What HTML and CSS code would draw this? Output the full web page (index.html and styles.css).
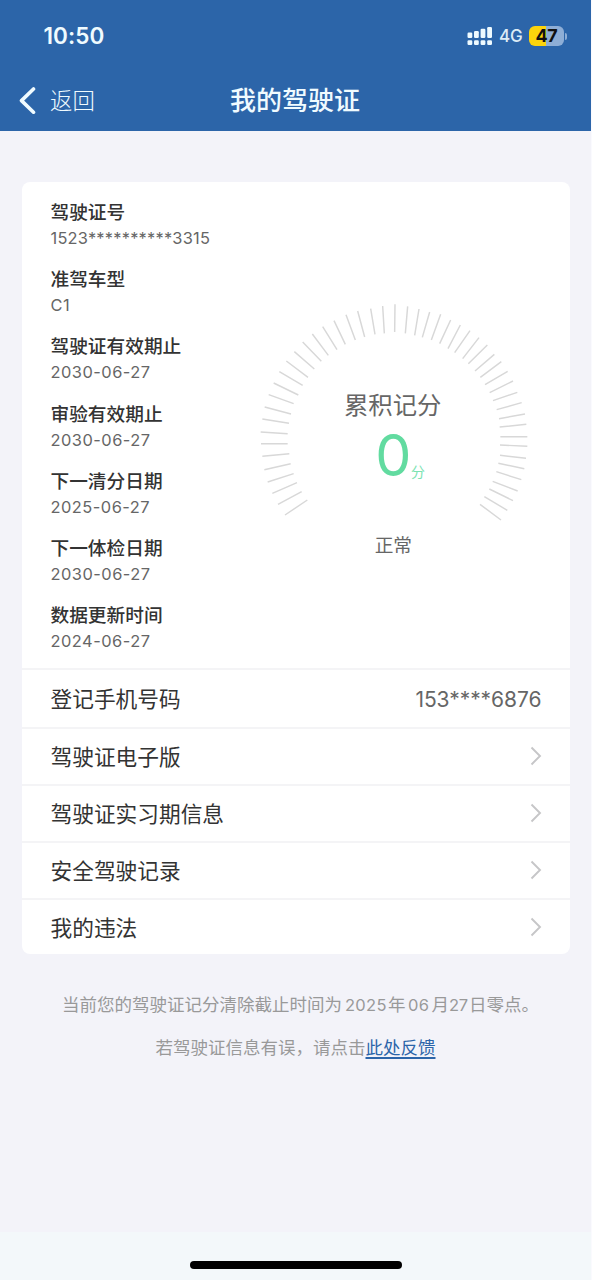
FILE: index.html
```html
<!DOCTYPE html>
<html lang="zh-CN">
<head>
<meta charset="utf-8">
<title>我的驾驶证</title>
<link rel="stylesheet" href="styles.css">
</head>
<body>
<div class="screen">
  <header class="header">
    <div class="status">
      <span class="clock">10:50</span>
      <div class="status-right">
        <svg class="signal" width="26" height="20" viewBox="0 0 26 20" fill="#eefaff">
          <rect x="0.5" y="6.5" width="4.8" height="5.5" rx="1.2"/><rect x="7" y="5" width="4.8" height="7" rx="1.2"/><rect x="13.6" y="2.8" width="4.8" height="9.2" rx="1.2"/><rect x="20.2" y="1" width="4.8" height="11" rx="1.2"/>
          <rect x="0.5" y="14.3" width="4.8" height="4.6" rx="1.2"/><rect x="7" y="14.3" width="4.8" height="4.6" rx="1.2"/><rect x="13.6" y="14.3" width="4.8" height="4.6" rx="1.2"/><rect x="20.2" y="14.3" width="4.8" height="4.6" rx="1.2"/>
        </svg>
        <span class="net">4G</span>
        <div class="battery">47</div>
        <div class="battery-cap"></div>
      </div>
    </div>
    <nav class="nav">
      <div class="back">
        <svg width="18" height="28" viewBox="0 0 18 28" fill="none" stroke="#f0fbff" stroke-width="3.6" stroke-linecap="round" stroke-linejoin="round"><path d="M15.5 2 3.5 13.6 15.5 25.2"/></svg>
        <span class="back-text">返回</span>
      </div>
      <h1 class="title">我的驾驶证</h1>
    </nav>
  </header>

  <main class="card">
    <section class="summary">
      <dl class="fields">
        <div class="field"><dt>驾驶证号</dt><dd class="id-number">1523**********3315</dd></div>
        <div class="field"><dt>准驾车型</dt><dd>C1</dd></div>
        <div class="field"><dt>驾驶证有效期止</dt><dd>2030-06-27</dd></div>
        <div class="field"><dt>审验有效期止</dt><dd>2030-06-27</dd></div>
        <div class="field"><dt>下一清分日期</dt><dd>2025-06-27</dd></div>
        <div class="field"><dt>下一体检日期</dt><dd>2030-06-27</dd></div>
        <div class="field"><dt>数据更新时间</dt><dd>2024-06-27</dd></div>
      </dl>
      <svg class="gauge" width="290" height="280" viewBox="0 0 870 840">
        <path class="ticks" d="M435 43L434 126M398 48L403 130M362 56L375 133M323 63L344 141M288 74L316 150M252 92L286 163M218 110L261 179M187 132L235 196M158 156L214 214M133 185L193 237M109 213L174 262M88 245L158 286M71 279L145 315M56 314L131 341M44 351L123 372M37 387L117 400M32 426L113 431M33 461H113M37 499L118 491M43 539L122 521M53 576L131 551M67 610L141 578M84 643L155 605M105 675L172 630
        M473 49L466 130M507 57L494 136M539 66L517 142M572 73L544 150M602 90L569 161M631 105L594 176M660 122L614 188M687 143L638 206M712 165L655 221M733 193L675 243M754 215L691 262M773 244L705 284M789 273L719 308M802 307L729 332M815 338L740 359M825 372L747 386M829 403L749 411M832 440H751M832 469L750 465M828 505L750 496M823 536L745 520M814 569L739 545M803 603L728 574M789 632L718 597M772 661L703 620M753 690L690 643"/>
        <text class="gauge-title" x="282" y="373">累积记分</text>
        <text class="gauge-score" x="430" y="558">0</text>
        <text class="gauge-unit" x="483" y="561">分</text>
        <text class="gauge-state" x="374" y="785">正常</text>
      </svg>
    </section>
    <ul class="rows">
      <li class="row row-phone"><span>登记手机号码</span><span class="phone">153****6876</span></li>
      <li class="row"><span>驾驶证电子版</span><svg class="chev" viewBox="0 0 12 20"><path d="M1.5 1.5 10 10 1.5 18.5"/></svg></li>
      <li class="row"><span>驾驶证实习期信息</span><svg class="chev" viewBox="0 0 12 20"><path d="M1.5 1.5 10 10 1.5 18.5"/></svg></li>
      <li class="row"><span>安全驾驶记录</span><svg class="chev" viewBox="0 0 12 20"><path d="M1.5 1.5 10 10 1.5 18.5"/></svg></li>
      <li class="row"><span>我的违法</span><svg class="chev" viewBox="0 0 12 20"><path d="M1.5 1.5 10 10 1.5 18.5"/></svg></li>
    </ul>
  </main>

  <div class="notes">
    <p class="deadline">当前您的驾驶证记分清除截止时间为<span class="num year">2025</span>年<span class="num month">06</span>月<span class="num day">27</span>日零点。</p>
    <p>若驾驶证信息有误，请点击<a class="link">此处反馈</a></p>
  </div>
  <footer class="home"><div class="home-bar"></div></footer>
</div>
</body>
</html>
```
FILE: styles.css
```css
* { box-sizing: border-box; margin: 0; padding: 0; }
body { background: #fafafe; font-family: Inter, "Noto Sans CJK SC", sans-serif; color: #333; }
.screen { width: 591px; height: 1280px; background: #f3f3f9; display: flex; flex-direction: column; }
.header { height: 131px; background: #2c65a9; color: #f0fbff; flex: none; }
.status { height: 70px; display: flex; justify-content: space-between; padding: 0 24px 0 43.5px; }
.clock { font-size: 22.5px; font-weight: 600; line-height: 72px; letter-spacing: 0.1px; }
.status-right { display: flex; align-items: center; height: 72px; }
.net { font-size: 17px; font-weight: 500; margin-left: 6px; width: 24px; opacity: .9; letter-spacing: -0.2px; }
.battery { width: 35px; height: 20px; margin-left: 6px; border-radius: 6px; background: linear-gradient(90deg, #fcd40c 48%, #8eaed6 48%); color: #111; font-size: 18px; font-weight: 700; line-height: 20px; text-align: center; letter-spacing: -0.3px; }
.battery-cap { width: 2px; height: 7px; margin-left: 1px; border-radius: 0 3px 3px 0; background: #8eaed6; }
.nav { height: 61px; display: grid; grid-template-columns: 230px 131px 1fr; align-items: center; }
.back { display: flex; align-items: center; padding-left: 17.5px; }
.back-text { font-size: 22.4px; margin-left: 14.5px; line-height: 60px; font-weight: 300; }
.title { font-size: 26px; font-weight: 500; line-height: 58px; white-space: nowrap; }
.card { width: 548px; height: 771.5px; margin: 51px 0 0 22px; background: #fff; border-radius: 8px; flex: none; }
.summary { height: 486px; display: flex; justify-content: space-between; padding-left: 28.5px; }
.fields { padding-top: 17.3px; width: 170px; }
.field { height: 67.1px; }
dt { font-size: 18.7px; line-height: 27px; font-weight: 500; white-space: nowrap; }
dd { font-size: 16.4px; line-height: 24px; color: #666; letter-spacing: 0.5px; }
.id-number { letter-spacing: 0.23px; }
.gauge { margin: 108px 30px 0 0; flex: none; }
.ticks { stroke: #d8d8d8; stroke-width: 4.4; fill: none; }
.gauge-title { font-size: 73px; fill: #666; }
.gauge-score { font-size: 172px; fill: #62dba0; text-anchor: middle; }
.gauge-unit { font-size: 42px; fill: #7ce3b2; }
.gauge-state { font-size: 56px; fill: #666; }
.rows { list-style: none; }
.row { height: 57.1px; border-top: 2px solid #f4f4f6; padding: 0 28.5px 2px; display: flex; justify-content: space-between; align-items: center; font-size: 21.7px; }
.row-phone { height: 58.5px; padding-bottom: 1px; }
.phone { font-size: 21px; color: #666; letter-spacing: -0.05px; padding-top: 3px; }
.chev { width: 12px; height: 20px; margin-top: 1.5px; fill: none; stroke: #c6c6c8; stroke-width: 1.9; }
.notes { flex: 1; padding-top: 31px; text-align: center; font-size: 17.5px; color: #999; }
.notes p { height: 43px; line-height: 40px; white-space: nowrap; }
.notes .deadline { text-align: left; padding-left: 62px; }
.num { display: inline-block; font-size: 16.5px; letter-spacing: 0.3px; }
.year { width: 46px; padding-left: 3px; }
.month { width: 26px; padding-left: 2.5px; }
.day { width: 20px; letter-spacing: -0.2px; }
.link { color: #2c65a9; text-decoration: underline; text-underline-offset: 3px; text-decoration-thickness: 1.5px; }
.home { height: 48px; background: #f3f8fa; padding: 29px 0 0 190px; }
.home-bar { width: 212px; height: 8px; border-radius: 4px; background: #000; }
```
